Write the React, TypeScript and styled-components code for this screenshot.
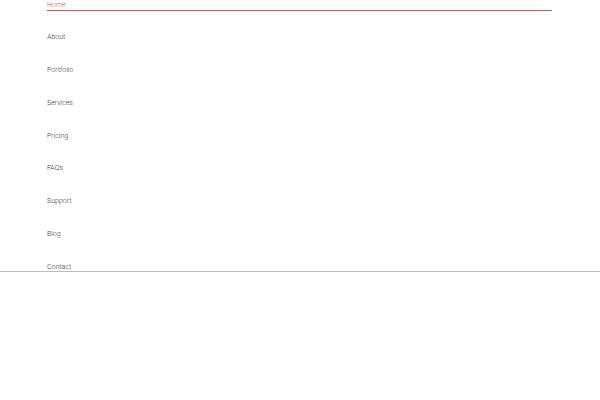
import styled, { createGlobalStyle } from 'styled-components'

const GlobalStyle = createGlobalStyle`
  html, body {
    margin: 0;
    padding: 0;
    background: #ffffff;
  }
  body {
    font-family: Roboto, "Liberation Sans", sans-serif;
  }
`

const items = ['Home', 'About', 'Portfolio', 'Services', 'Pricing', 'FAQs', 'Support', 'Blog', 'Contact']

const App = () => {
  return (
    <>
      <GlobalStyle />
      <Nav>
        <Menu>
          {items.map((label, i) => (
            <Item key={label} $active={i === 0}>
              <a href="#">{label}</a>
            </Item>
          ))}
        </Menu>
      </Nav>
    </>
  )
}

export default App

const Nav = styled.nav`
  height: 271px;
  border-bottom: 1px solid #bdbdbd;
  padding: 0 48px 0 47px;
`

const Menu = styled.ul`
  list-style: none;
  margin: 0;
  padding: 0;
  display: flex;
  flex-direction: column;
`

const Item = styled.li<{ $active?: boolean }>`
  height: 32.75px;

  a {
    display: block;
    font-size: 7px;
    font-weight: 300;
    line-height: 9px;
    padding-top: 0.5px;
    padding-bottom: 0.5px;
    text-decoration: none;
    color: ${p => (p.$active ? '#d4574e' : '#3a3a3a')};
    border-bottom: ${p => (p.$active ? '1.5px solid #d4574e' : 'none')};
  }
`
